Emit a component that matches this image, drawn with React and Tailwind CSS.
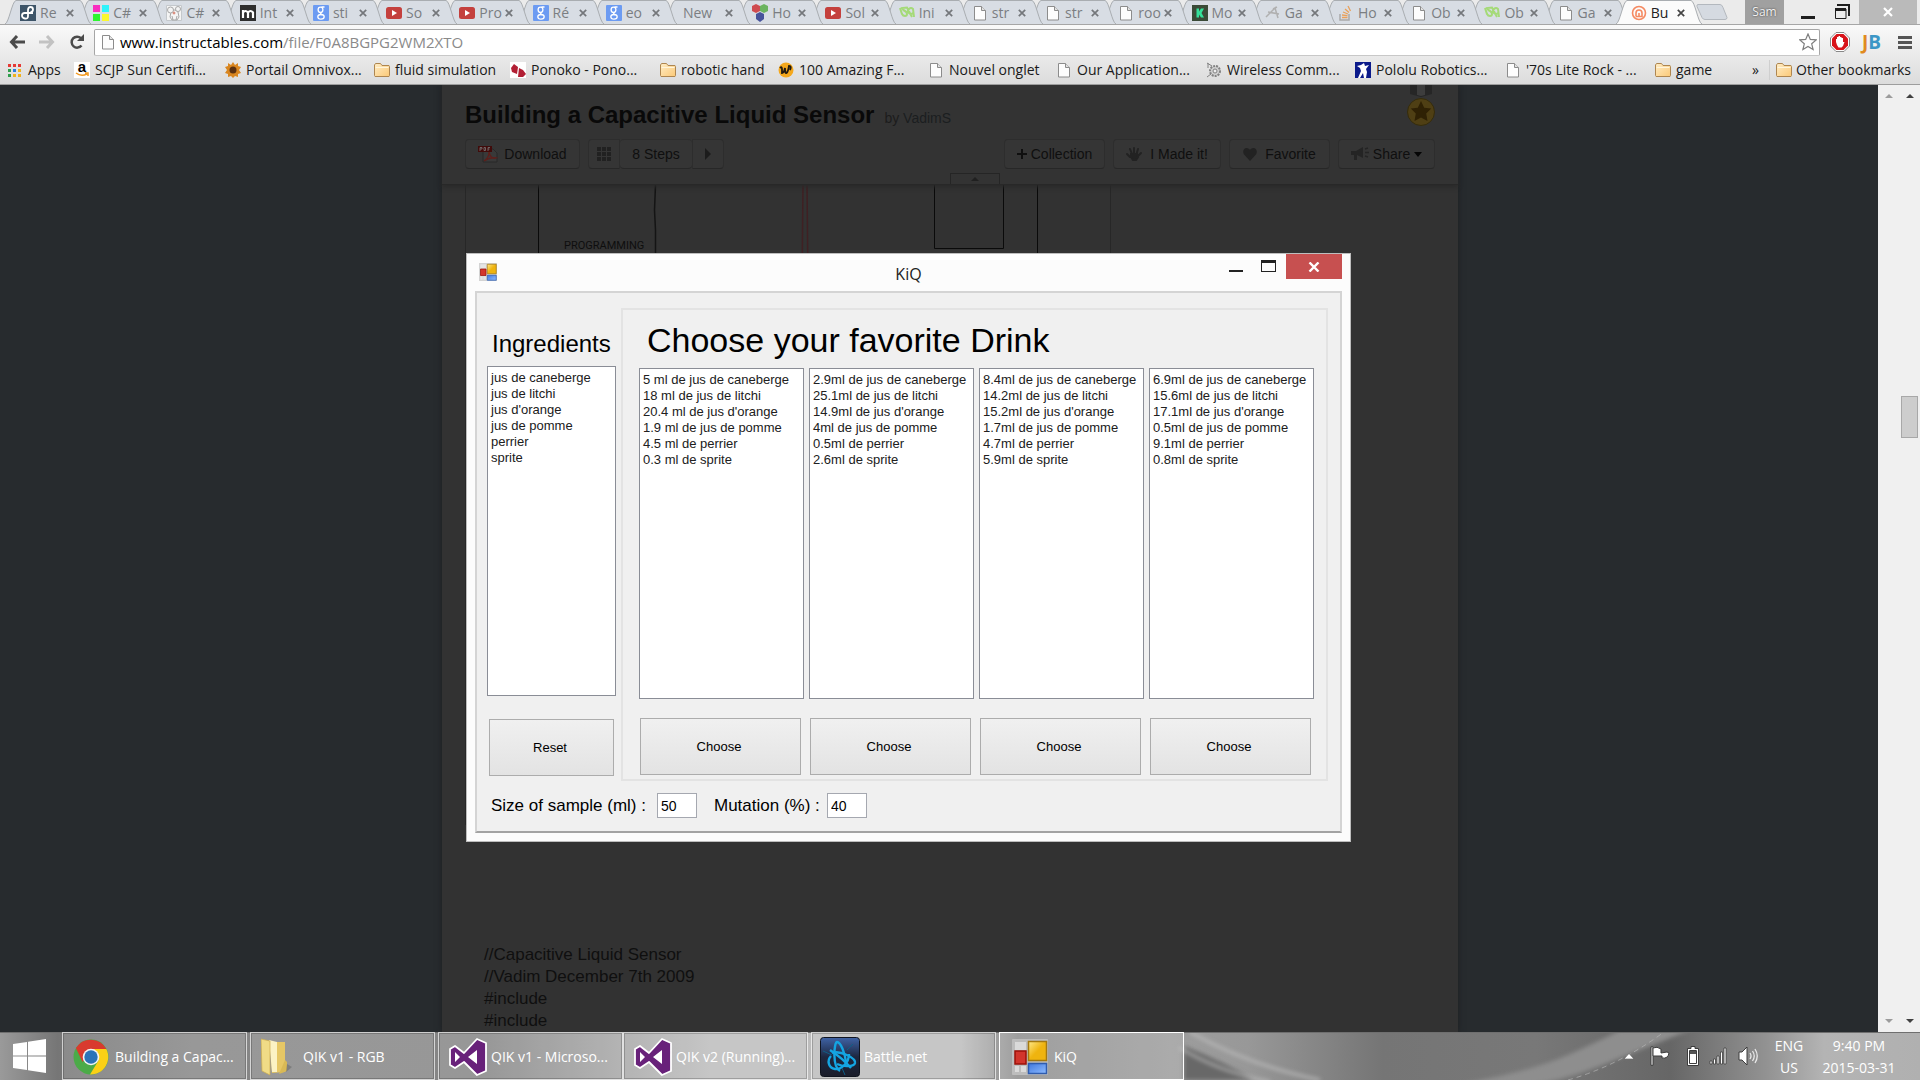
import React from "react";

/* ---------- small icons ---------- */

function PageIcon() {
  return (
    <svg viewBox="0 0 12 16" className="h-4 w-3 shrink-0" fill="#fdfdfd" stroke="#8c8c8c">
      <path d="M.5 1.5h7l4 4v9.5h-11z" />
      <path d="M7.5 1.5v4h4" fill="#e2e2e2" />
    </svg>
  );
}

function FolderIcon() {
  return (
    <svg viewBox="0 0 16 14" className="h-3.5 w-4 shrink-0" fill="none">
      <defs>
        <linearGradient id="fold" x1="0" y1="0" x2="1" y2="1">
          <stop offset="0" stopColor="#ffedc6" />
          <stop offset="1" stopColor="#fbc977" />
        </linearGradient>
      </defs>
      <path d="M.5 12.5V2l1-1.5h5L8 2.5h7l.5 1v9l-.5 1H1z" fill="url(#fold)" stroke="#ae8650" />
      <path d="M1.5 4.5h13" stroke="#fff5dc" />
    </svg>
  );
}

function YouTube() {
  return (
    <svg viewBox="0 0 16 16" className="h-4 w-4">
      <rect y="2" width="16" height="12" rx="2.5" fill="#c4403d" />
      <path d="M6 5l5 3-5 3z" fill="#fff" />
    </svg>
  );
}

function GoogleG() {
  return (
    <svg viewBox="0 0 16 16" className="h-4 w-4">
      <rect width="16" height="16" rx="1" fill="#6c9bf2" />
      <g fill="none" stroke="#fff" strokeWidth="1.3">
        <ellipse cx="7.5" cy="4.8" rx="2.4" ry="2.7" />
        <path d="M8.5 2h3M8.5 7.5q-2 1.2.5 2.3" />
        <ellipse cx="8" cy="11.8" rx="3.2" ry="2.3" />
      </g>
    </svg>
  );
}

function GreenLoops() {
  return (
    <svg viewBox="0 0 16 16" className="h-4 w-4" fill="none" stroke="#a5da78" strokeWidth="2">
      <path d="M1 3l2 6q1 2 3 2t2-2-2-3-3-3l5-.5 5 9.5M15 12l-1-8q-2-2-4 0t0 4 4 0" />
    </svg>
  );
}

function Favicon({ kind }) {
  switch (kind) {
    case "re":
      return (
        <svg viewBox="0 0 16 16" className="h-4 w-4">
          <rect width="16" height="16" fill="#3d5468" />
          <path
            d="M13 8H4.5Q2 8 2 10.5T5 13.500 8 11V5q0-3 2.500-3T13 4.500 10.500 7"
            fill="none"
            stroke="#fff"
            strokeWidth="1.8"
          />
        </svg>
      );
    case "cmyk":
      return (
        <svg viewBox="0 0 16 16" className="h-4 w-4">
          <path fill="#f92dc0" d="M0 0h7v7H0z" />
          <path fill="#2ff3fb" d="M9 0h7v7H9z" />
          <path fill="#2df52f" d="M0 9h7v7H0z" />
          <path fill="#fbf82f" d="M9 9h7v7H9z" />
        </svg>
      );
    case "mouse":
      return (
        <svg viewBox="0 0 16 16" className="h-4 w-4" fill="#f4f4f4" stroke="#a7a7a7">
          <path d="M.5.5h15v15H.5z" stroke="#c4c8cc" />
          <path d="M5 7q3-4 7 0l1 5-2 3H6l-2-3z" />
          <circle cx="4.5" cy="5" r="3" />
          <circle cx="12" cy="4" r="2.5" />
          <circle cx="8" cy="8" r="1" fill="#d98a7a" stroke="#d98a7a" />
          <path d="M6 11l1 4M11 11l-1 4" />
        </svg>
      );
    case "m":
      return (
        <svg viewBox="0 0 16 16" className="h-4 w-4">
          <rect width="16" height="16" fill="#2e2e2e" />
          <path d="M3 13V5M3 7.5q2.5-3 5 0V13M8 7.5q2.5-3 5 0V13" fill="none" stroke="#fff" strokeWidth="2.2" />
        </svg>
      );
    case "g":
      return <GoogleG />;
    case "yt":
      return <YouTube />;
    case "cubes":
      return (
        <svg viewBox="0 0 16 18" className="h-[18px] w-4">
          <path d="M0 2l4-2 4 2v5L4 9 0 7z" fill="#cf4b4f" />
          <path d="M8 2l4-2 4 2v5l-4 2-4-2z" fill="#6bb45f" />
          <path d="M4 10l4-2 4 2v5l-4 3-4-3z" fill="#47539b" />
        </svg>
      );
    case "loops":
      return <GreenLoops />;
    case "page":
      return <PageIcon />;
    case "k":
      return (
        <svg viewBox="0 0 16 16" className="h-4 w-4">
          <rect width="16" height="16" fill="#3a4a37" />
          <path d="M4.5 3.5H7v3l2-3h3L9.5 8l2.5 4.5H9L7 9.5v3H4.5z" fill="#35e09a" />
        </svg>
      );
    case "gray":
      return (
        <svg viewBox="0 0 16 16" className="h-4 w-4" fill="none" stroke="#b0b0b0" strokeWidth="1.5">
          <path d="M1 12L10 3l3 10M3 7l11 2M8 4l4-2" />
        </svg>
      );
    case "so":
      return (
        <svg viewBox="0 0 16 16" className="h-4 w-4" fill="none">
          <path d="M2 9v6h9V9" stroke="#a9a9a9" strokeWidth="1.5" />
          <path d="M4 12.5h5.5M4 10l5.5.6M5 7l5 2M7 4l4 3.5M10 1l2.5 5" stroke="#e9a15b" strokeWidth="1.3" />
        </svg>
      );
    case "instr":
      return (
        <svg viewBox="0 0 16 16" className="h-4 w-4" fill="none" stroke="#f58a62" strokeWidth="1.6">
          <circle cx="8" cy="8" r="6.5" />
          <path d="M5 11.5V8a3 3 0 0 1 6 0v3.5H5M8 8v3.5" />
        </svg>
      );
    default:
      return null;
  }
}

const tabs = [
  ["Re", "re"], ["C#", "cmyk"], ["C#", "mouse"], ["Int", "m"], ["sti", "g"], ["So", "yt"], ["Pro", "yt"],
  ["Ré", "g"], ["eo", "g"], ["New", null], ["Ho", "cubes"], ["Sol", "yt"], ["Ini", "loops"], ["str", "page"],
  ["str", "page"], ["roo", "page"], ["Mo", "k"], ["Ga", "gray"], ["Ho", "so"], ["Ob", "page"], ["Ob", "loops"],
  ["Ga", "page"], ["Bu", "instr"],
];

function TabStrip() {
  return (
    <div className="flex h-6 shrink-0 bg-[#ebebeb]">
      <div role="tablist" className="flex min-w-0 flex-1 pl-[5px]">
        {tabs.map(([title, icon], i) => {
          const active = i === tabs.length - 1;
          return (
            <div key={i} className="relative min-w-0 flex-1" style={{ zIndex: active ? 40 : 30 - i }}>
              <svg viewBox="0 0 86 24" className="absolute top-0 left-0 h-6 w-[86px]" preserveAspectRatio="none">
                <path
                  d="M0 24C4 23 7 1 11 .5h64C79 1 82 23 86 24"
                  fill={active ? "#fbfbfb" : "#d8dde4"}
                  stroke="#a9adb1"
                />
              </svg>
              <div className="relative flex h-full items-center pt-px pl-[15px]">
                <button role="tab" aria-selected={active} className="flex h-full w-[46px] items-center gap-1">
                  {icon && (
                    <span className="flex w-4 shrink-0 justify-center">
                      <Favicon kind={icon} />
                    </span>
                  )}
                  <span
                    className={
                      "text-sm whitespace-nowrap " +
                      (icon ? "" : "pl-1 ") +
                      (active ? "text-[#222]" : "text-[#7b7e82]")
                    }
                  >
                    {title}
                  </span>
                </button>
                <button aria-label="Close tab" className={active ? "text-[#444]" : "text-[#74777b]"}>
                  <svg viewBox="0 0 8 8" className="h-2 w-2" fill="none" stroke="currentColor" strokeWidth="1.7">
                    <path d="M.8.8l6.4 6.4M7.2.8L.8 7.2" />
                  </svg>
                </button>
              </div>
            </div>
          );
        })}
      </div>
      <div className="flex w-[231px] shrink-0">
        <button aria-label="New tab" className="flex w-[56px] items-center pl-[7px]">
          <svg viewBox="0 0 32 16" className="h-4 w-8">
            <path d="M2 .5h22q2 0 3 3l4 10q0 2-2 2H9q-2 0-3-2L1 2.5Q.5.5 2 .5z" fill="#d5dae1" stroke="#b3b8be" />
          </svg>
        </button>
        <button className="w-[39px] bg-[#a0a0a0] text-xs text-[#f2f2f2] [text-shadow:0_0_2px_#333]">Sam</button>
        <button aria-label="Minimize" className="flex w-[40px] justify-center pt-4 pl-2">
          <span className="h-[3px] w-3.5 bg-[#1e1e1e]" />
        </button>
        <button aria-label="Restore" className="flex flex-1 items-center justify-center">
          <svg viewBox="0 0 16 16" className="h-4 w-4" fill="none" stroke="#1e1e1e">
            <path d="M3 1h12v11" strokeWidth="2" />
            <path d="M1 5.5h11" strokeWidth="3" />
            <path d="M1.5 5v9.5H12V5" />
          </svg>
        </button>
        <button aria-label="Close" className="mr-[3px] flex w-[58px] items-center justify-center bg-[#bababa]">
          <svg viewBox="0 0 10 10" className="h-2.5 w-2.5" stroke="#fff" strokeWidth="2.2">
            <path d="M1 1l8 8M9 1L1 9" />
          </svg>
        </button>
      </div>
    </div>
  );
}

function Toolbar() {
  return (
    <div className="flex h-[30px] shrink-0 items-center">
      <div className="flex w-[94px] shrink-0 items-center gap-3.5 pl-[9px]">
        <button aria-label="Back">
          <svg viewBox="0 0 16 14" className="h-3.5 w-4" fill="none" stroke="#4b4b4b" strokeWidth="3">
            <path d="M8 1L2.5 7 8 13M3 7h13" />
          </svg>
        </button>
        <button aria-label="Forward">
          <svg viewBox="0 0 16 14" className="h-3.5 w-4" fill="none" stroke="#c2c2c2" strokeWidth="3">
            <path d="M8 1l5.5 6L8 13M13 7H0" />
          </svg>
        </button>
        <button aria-label="Reload">
          <svg viewBox="0 0 16 16" className="h-4 w-4" fill="none" stroke="#4b4b4b" strokeWidth="2.5">
            <path d="M12.5 11.5A5.5 5.5 0 1 1 12 4.2" />
            <path d="M15 0v7H8z" fill="#4b4b4b" stroke="none" />
          </svg>
        </button>
      </div>
      <label className="relative flex h-[27px] min-w-0 flex-1 items-center gap-1.5 rounded-xs border border-[#a6a6a6] border-b-[#c8c8c8] bg-white pl-[7px]">
        <PageIcon />
        <span className="flex-1 text-[15px] whitespace-nowrap text-[#8a8a8a]">
          <span className="text-black">www.instructables.com</span>/file/F0A8BGPG2WM2XTO
        </span>
        <input
          aria-label="Address"
          defaultValue=""
          className="absolute inset-0 w-full bg-transparent opacity-0"
        />
        <svg viewBox="0 0 18 18" className="mr-0.5 h-[18px] w-[18px]" fill="#fff" stroke="#7d7d7d" strokeWidth="1.2">
          <path d="M9 1l2.3 5.4 5.9.5-4.5 3.9 1.4 5.7L9 13.4l-5.1 3.1 1.4-5.7L.8 6.9l5.9-.5z" />
        </svg>
      </label>
      <div className="flex w-[100px] shrink-0 items-center pl-2.5">
        <button aria-label="AdBlock">
          <svg viewBox="0 0 20 20" className="h-5 w-5">
            <path d="M6 .5h8L19.5 6v8L14 19.5H6L.5 14V6z" fill="#fff" stroke="#888" />
            <path d="M6.5 2h7L18 6.5v7L13.5 18h-7L2 13.5v-7z" fill="#d8141a" />
            <path d="M6 10V7h1V5h1.5V4H10v1h1.5v1H13v4h1.5L13 14l-1.5 1.5h-3L7 13z" fill="#fff" />
          </svg>
        </button>
        <button className="ml-3 flex w-[22px] font-['Open_Sans',sans-serif] text-[19px] leading-5 font-bold text-[#e08a20]">
          J<span className="text-[#3c97c6]">B</span>
        </button>
        <button aria-label="Menu" className="ml-3.5 flex w-3.5 flex-col gap-[2px]">
          <span className="h-[3px] bg-[#555]" />
          <span className="h-[3px] bg-[#555]" />
          <span className="h-[3px] bg-[#555]" />
        </button>
      </div>
    </div>
  );
}

function BookmarkIcon({ kind }) {
  switch (kind) {
    case "apps":
      return (
        <svg viewBox="0 0 13 13" className="h-[13px] w-[13px]">
          <path d="M0 0h3v3H0zM5 0h3v3H5zM10 0h3v3h-3z" fill="#e53a35" />
          <path d="M0 5h3v3H0z" fill="#2f9e4c" />
          <path d="M5 5h3v3H5z" fill="#2b7de0" />
          <path d="M10 5h3v3h-3z" fill="#f0b21f" />
          <path d="M0 10h3v3H0z" fill="#2f9e4c" />
          <path d="M5 10h3v3H5zM10 10h3v3h-3z" fill="#f0b21f" />
        </svg>
      );
    case "amazon":
      return (
        <span className="flex h-4 w-4 flex-col items-center bg-white font-['Liberation_Sans',sans-serif] text-[15px] leading-[10px] font-bold text-black">
          a
          <svg viewBox="0 0 14 5" className="h-[5px] w-3.5" fill="none" stroke="#f49a1e" strokeWidth="1.5">
            <path d="M1 1q5 4 11 1M10 1h3v3" />
          </svg>
        </span>
      );
    case "sun":
      return (
        <svg viewBox="0 0 16 16" className="h-4 w-4">
          <path
            d="M8 0l2 3 3-2v3l3 1-2 3 2 3-3 1v3l-3-1-2 2-2-2-3 1v-3l-3-1 2-3-2-3 3-1V1l3 2z"
            fill="#d9861f"
          />
          <circle cx="8" cy="8" r="3.5" fill="#5a3010" />
        </svg>
      );
    case "ponoko":
      return (
        <svg viewBox="0 0 16 16" className="h-4 w-4">
          <rect width="16" height="16" fill="#fff" />
          <path d="M1 6l3-4 4 3-1 7-5-2zM9 6l4 2 3 4-3 3H8z" fill="#b21f34" />
        </svg>
      );
    case "w":
      return (
        <svg viewBox="0 0 16 16" className="h-4 w-4">
          <circle cx="8" cy="8" r="7.5" fill="#f5a81c" />
          <path d="M2 6q2-2 2 1t0 4q2 0 3-5 0 6 1.5 5T11 4q3 0 1 4" fill="none" stroke="#221a10" strokeWidth="1.8" />
        </svg>
      );
    case "gear":
      return (
        <svg viewBox="0 0 16 16" className="h-4 w-4" fill="#d0d0d0" stroke="#828282">
          <circle cx="9" cy="9" r="5" strokeDasharray="2 1" strokeWidth="2" />
          <circle cx="9" cy="9" r="2" fill="#eee" />
          <path d="M1 1l5 3M1 15l4-3M2 1v5" />
        </svg>
      );
    case "pololu":
      return (
        <svg viewBox="0 0 16 16" className="h-4 w-4">
          <rect width="16" height="16" fill="#0b1a8a" />
          <path d="M9 1l1 3 4-1-3 4 1 3-1 6H9l-1-5-3 5H3l3-7-1-3-3-2 4-1z" fill="#fff" />
        </svg>
      );
    case "folder":
      return <FolderIcon />;
    default:
      return <PageIcon />;
  }
}

const bookmarks = [
  ["Apps", "apps", "w-[66px] gap-[7px]"],
  ["SCJP Sun Certifi...", "amazon", "w-[151px] gap-[5px]"],
  ["Portail Omnivox...", "sun", "w-[149px] gap-[5px]"],
  ["fluid simulation", "folder", "w-[136px] gap-[5px]"],
  ["Ponoko - Pono...", "ponoko", "w-[150px] gap-[5px]"],
  ["robotic hand", "folder", "w-[118px] gap-[5px]"],
  ["100 Amazing F...", "w", "w-[152px] gap-[5px]"],
  ["Nouvel onglet", "page", "w-[128px] gap-[7px]"],
  ["Our Application...", "page", "w-[148px] gap-[7px]"],
  ["Wireless Comm...", "gear", "w-[149px] gap-[5px]"],
  ["Pololu Robotics...", "pololu", "w-[152px] gap-[5px]"],
  ["'70s Lite Rock - ...", "page", "w-[148px] gap-[7px]"],
  ["game", "folder", "w-[64px] gap-[5px]"],
];

function Bookmarks() {
  return (
    <nav className="flex h-[27px] shrink-0 items-center pr-[9px] pb-px pl-2 text-sm text-[#1a1a1a]">
      {bookmarks.map(([label, icon, box]) => (
        <a key={label} href="#" className={"flex shrink-0 items-center whitespace-nowrap " + box}>
          <BookmarkIcon kind={icon} />
          {label}
        </a>
      ))}
      <button className="ml-auto pr-2.5" aria-label="More bookmarks">»</button>
      <a href="#" className="flex items-center gap-1 border-l border-[#cfcfcf] pl-1.5 whitespace-nowrap">
        <FolderIcon />
        Other bookmarks
      </a>
    </nav>
  );
}

/* ---------- dimmed article ---------- */

const pill =
  "flex h-[30px] items-center justify-center rounded-sm border border-[#2d2d2d] border-b-[#272727] bg-[#353535] text-sm text-[#0f0f0f]";

function ArticleHeader() {
  return (
    <header className="relative border-b border-[#282828] bg-[#333] px-[23px] pt-4 pb-[15px] shadow-[0_2px_4px_#292929]">
      <div className="flex items-baseline gap-2.5 leading-7">
        <h1 className="text-2xl leading-7 font-bold text-[#090909]">Building a Capacitive Liquid Sensor</h1>
        <span className="text-sm text-[#1c1c1c]">
          by <a href="#" className="text-[#1b1e20]">VadimS</a>
        </span>
      </div>
      <div className="mt-2.5 flex items-center">
        <button className={pill + " w-[115px] gap-1.5"}>
          <svg viewBox="0 0 20 17" className="h-[17px] w-5">
            <path d="M5 3h10l4 4v9H5z" fill="#393939" stroke="#292929" />
            <path d="M6 15c3-2 5-6 5-9 1 5 4 7 7 6-5-1-9 1-12 3z" fill="none" stroke="#5c1f1b" strokeWidth="1.3" />
            <rect width="14" height="6" fill="#400b0a" />
            <path d="M2 5V1.5h2V3H2M6 1.5v3h1.5v-3zM10 5V1.5h2M10 3h1.5" fill="none" stroke="#777" strokeWidth=".8" />
          </svg>
          Download
        </button>
        <div className="ml-2 flex w-[136px]">
          <button aria-label="All steps" className={pill + " w-8 rounded-r-none bg-[#2c2c2c]"}>
            <svg viewBox="0 0 14 14" className="h-3.5 w-3.5" fill="#212121">
              <path d="M0 0h4v4H0zM5 0h4v4H5zM10 0h4v4h-4zM0 5h4v4H0zM5 5h4v4H5zM10 5h4v4h-4zM0 10h4v4H0zM5 10h4v4H5zM10 10h4v4h-4z" />
            </svg>
          </button>
          <button className={pill + " flex-1 rounded-none border-x-0"}>8 Steps</button>
          <button aria-label="Next" className={pill + " w-8 rounded-l-none"}>
            <svg viewBox="0 0 6 12" className="h-3 w-1.5" fill="#1c1c1c">
              <path d="M0 0l6 6-6 6z" />
            </svg>
          </button>
        </div>
        <div className="ml-auto flex gap-2">
          <button className={pill + " w-[101px] gap-1"}>
            <svg viewBox="0 0 10 10" className="h-2.5 w-2.5" stroke="#0f0f0f" strokeWidth="2">
              <path d="M5 0v10M0 5h10" />
            </svg>
            Collection
          </button>
          <button className={pill + " w-[108px] gap-2"}>
            <svg viewBox="0 0 16 16" className="h-4 w-4" fill="none" stroke="#222" strokeWidth="2" strokeLinecap="round">
              <path d="M6 8L4 3M8 7V2M10.5 8L12 3M12 10l3-3M4 11L1 8" />
              <path d="M5 8h6l1 3-2 3H7l-2-3z" fill="#222" />
            </svg>
            I Made it!
          </button>
          <button className={pill + " w-[101px] gap-2"}>
            <svg viewBox="0 0 14 14" className="h-3.5 w-3.5" fill="#222">
              <path d="M7 14L1 7.5C-1 4 1 1 3.5 1 5.5 1 6.5 2 7 3c.5-1 1.5-2 3.5-2C13 1 15 4 13 7.5z" />
            </svg>
            Favorite
          </button>
          <button className={pill + " w-[97px] gap-1"}>
            <svg viewBox="0 0 18 14" className="h-3.5 w-[18px]" fill="#242424">
              <path d="M0 4h5l7-4v11L6 8v5H3V8H0z" />
              <path d="M14 2l3-1M14 5.5h4M14 9l3 1" stroke="#242424" strokeWidth="1.5" />
            </svg>
            Share
            <svg viewBox="0 0 8 5" className="h-[5px] w-2" fill="#050505">
              <path d="M0 0h8L4 5z" />
            </svg>
          </button>
        </div>
      </div>
      <svg viewBox="0 0 28 42" className="absolute top-0 right-[23px] h-[42px] w-7">
        <path d="M3 0h22v9l-11 3L3 9z" fill="#262626" />
        <path d="M10 0h8v10l-4 1-4-1z" fill="#3d3d3d" />
        <circle cx="14" cy="27" r="13.5" fill="#4f3f14" stroke="#352c0c" />
        <path d="M14 16l3.2 6.8 7 .8-5 5 1.3 7.4-6.5-3.5L7.5 36l1.3-7.4-5-5 7-.8z" fill="#2f2104" />
      </svg>
      <button
        aria-label="Collapse header"
        className="absolute right-[458px] bottom-0 flex h-[11px] w-[50px] items-center justify-center border border-b-0 border-[#252525]"
      >
        <svg viewBox="0 0 8 4" className="h-1 w-2" fill="#202020">
          <path d="M0 4l4-4 4 4z" />
        </svg>
      </button>
    </header>
  );
}

function Article() {
  return (
    <main className="mx-auto flex h-full w-[1016px] flex-col bg-[#323232] font-['Liberation_Sans',Arial,sans-serif] shadow-[0_0_6px_#1c1e20]">
      <ArticleHeader />
      <svg viewBox="0 0 646 640" className="ml-[23px] h-[640px] w-[646px] shrink-0" fill="none">
        <path d="M.5 0v640M645.5 0v640" stroke="#272727" />
        <path d="M73.5 0v600M572.5 0v600M469.5 0v63.5h69V0" stroke="#0a0a0a" />
        <path d="M190.5 0l-1 25 1 20v500" stroke="#141414" strokeWidth="1.5" />
        <path d="M338 0l-1 100M342 0l1 100" stroke="#3f2023" strokeWidth="1.5" />
        <text x="99" y="64" fill="#0e0e0e" className="font-['Roboto',sans-serif] text-[11px]">
          PROGRAMMING
        </text>
      </svg>
      <p className="mt-[119px] pl-[42px] text-[17px] leading-[22px] text-[#0f0f0f]">
        //Capacitive Liquid Sensor
        <br />
        //Vadim December 7th 2009
        <br />
        #include
        <br />
        #include
      </p>
    </main>
  );
}

function ScrollColumn({ color, thumb }) {
  return (
    <div className="flex w-[21px] flex-col items-center bg-[#f0f0f0] py-[9px]">
      <svg viewBox="0 0 8 4" className="h-1 w-2" fill={color}>
        <path d="M0 4l4-4 4 4z" />
      </svg>
      {thumb && <div className="mt-[298px] h-[42px] w-[17px] border border-[#a8a8a8] bg-[#cdcdcd]" />}
      <svg viewBox="0 0 8 4" className="mt-auto h-1 w-2" fill={color}>
        <path d="M0 0l4 4 4-4z" />
      </svg>
    </div>
  );
}

/* ---------- KiQ dialog ---------- */

function FormIcon({ className }) {
  return (
    <svg viewBox="0 0 36 36" className={className}>
      <defs>
        <linearGradient id="fy" x1="0" y1="0" x2="1" y2="1">
          <stop offset="0" stopColor="#ffe98a" />
          <stop offset=".5" stopColor="#efb40f" />
        </linearGradient>
        <linearGradient id="fb" x1="0" y1="0" x2="1" y2="1">
          <stop offset="0" stopColor="#3f78e0" />
          <stop offset="1" stopColor="#8fbcff" />
        </linearGradient>
      </defs>
      <path d="M.5.5h35v35H.5z" fill="#c9c9c9" fillOpacity=".7" stroke="#bdbdbd" />
      <path d="M3 3h11v8H3zM3 27h4v6H3zM9 27h5v6H9z" fill="#eee" fillOpacity=".6" />
      <path d="M16.5 2.5h18v19h-18z" fill="url(#fy)" stroke="#a5790f" strokeWidth="1.5" />
      <path d="M3 12h11v13H3z" fill="#d2352c" stroke="#9c1109" strokeWidth="1.5" />
      <path d="M16.5 24.5h18v10h-18z" fill="url(#fb)" stroke="#2f5cae" strokeWidth="1.5" />
    </svg>
  );
}

const ingredients = ["jus de caneberge", "jus de litchi", "jus d'orange", "jus de pomme", "perrier", "sprite"];

const drinks = [
  ["5 ml", "18 ml", "20.4 ml", "1.9 ml", "4.5 ml", "0.3 ml"],
  ["2.9ml", "25.1ml", "14.9ml", "4ml", "0.5ml", "2.6ml"],
  ["8.4ml", "14.2ml", "15.2ml", "1.7ml", "4.7ml", "5.9ml"],
  ["6.9ml", "15.6ml", "17.1ml", "0.5ml", "9.1ml", "0.8ml"],
];

function ListBox({ items, label, className }) {
  return (
    <ul
      role="listbox"
      aria-label={label}
      className={"border border-[#8a8d96] bg-white px-[3px] pt-[3px] text-[13px] leading-4 whitespace-nowrap text-[#202020] " + className}
    >
      {items.map((t) => (
        <li key={t} role="option" aria-selected="false">
          {t}
        </li>
      ))}
    </ul>
  );
}

const formButton =
  "h-[57px] border border-[#acacac] bg-linear-to-b from-[#f0f0f0] to-[#e3e3e3] pr-[3px] text-[13px] text-black";

const field = "h-[25px] w-10 border border-[#a5a8b0] bg-white px-[3px] text-sm";

function Dialog() {
  return (
    <div
      role="dialog"
      aria-labelledby="kiq-title"
      className="absolute top-[253px] left-[466px] z-10 w-[885px] border border-[#bdbdbd] bg-[#fcfcfc] px-2 pb-2 font-['Liberation_Sans',Arial,sans-serif]"
    >
      <div className="relative flex h-[37px] items-start">
        <FormIcon className="mt-[9px] ml-1 h-[18px] w-[18px]" />
        <h2
          id="kiq-title"
          className="absolute inset-x-0 top-2 text-center font-['Open_Sans',sans-serif] text-base text-[#222]"
        >
          KiQ
        </h2>
        <div className="relative ml-auto flex h-[25px]">
          <button aria-label="Minimize" className="flex w-8 justify-center pt-4">
            <span className="h-[2px] w-3.5 bg-[#222]" />
          </button>
          <button aria-label="Maximize" className="flex w-8 justify-center pt-1.5">
            <span className="h-3 w-[15px] border border-t-[3px] border-[#222]" />
          </button>
          <button aria-label="Close" className="ml-0.5 flex w-14 items-center justify-center bg-[#c75050]">
            <svg viewBox="0 0 12 10" className="h-2.5 w-3" stroke="#fff" strokeWidth="2.4">
              <path d="M1.5.5l9 9M10.5.5l-9 9" />
            </svg>
          </button>
        </div>
      </div>
      <div className="border-2 border-[#d4d4d4] border-b-[#a3a3a3] bg-[#f0f0f0] px-2.5 pb-3">
        <div className="flex gap-[5px] pt-[15px]">
          <div className="flex w-[129px] shrink-0 flex-col">
            <h3 className="flex h-[58px] items-end pb-1 pl-[5px] text-2xl leading-9 text-black">Ingredients</h3>
            <ListBox label="Ingredients" items={ingredients} className="h-[330px]" />
            <button className={formButton + " mx-0.5 mt-[23px]"}>Reset</button>
          </div>
          <section className="mr-0.5 flex-1 border-2 border-[#e3e3e3] pr-3 pb-1 pl-4">
            <h3 className="flex h-[58px] items-end pb-2.5 pl-2 text-[34px] leading-9 text-black">
              Choose your favorite Drink
            </h3>
            <div className="grid grid-cols-4 gap-[5px]">
              {drinks.map((amounts, i) => (
                <div key={i} className="flex flex-col">
                  <ListBox
                    label={"Drink " + (i + 1)}
                    items={amounts.map((amount, k) => amount + " de " + ingredients[k])}
                    className="h-[331px]"
                  />
                  <button className={formButton + " mt-[19px] mr-[3px] ml-px"}>Choose</button>
                </div>
              ))}
            </div>
          </section>
        </div>
        <form className="mt-3 flex items-center pl-1 text-[17px] text-black">
          <label htmlFor="sample" className="w-[166px]">Size of sample (ml) :</label>
          <input id="sample" defaultValue="50" className={field} />
          <label htmlFor="mutation" className="ml-[17px] w-[113px]">Mutation (%) :</label>
          <input id="mutation" defaultValue="40" className={field} />
        </form>
      </div>
    </div>
  );
}

/* ---------- taskbar ---------- */

function ChromeIcon() {
  return (
    <svg viewBox="0 0 36 36" className="h-9 w-9">
      <circle cx="18" cy="18" r="17.5" fill="#4bab48" />
      <path d="M2.9 9A17.5 17.5 0 0 1 33.3 10H18l-8.5 13z" fill="#d93a2e" />
      <path d="M33.3 10A17.5 17.5 0 0 1 17 35.5l8.5-14L18 10z" fill="#fbd016" />
      <circle cx="18" cy="18" r="8.3" fill="#f3f3f3" />
      <circle cx="18" cy="18" r="6.7" fill="#2b73b8" />
    </svg>
  );
}

function TaskFolder() {
  return (
    <svg viewBox="0 0 32 38" className="h-[38px] w-8">
      <path d="M9 4h15v30l-13 1z" fill="#e6c765" />
      <path d="M8 2l8 2v30h-5z" fill="#fbf2c4" />
      <path d="M0 1l9 2v34l-8-4z" fill="#f0db86" stroke="#cfae4e" strokeWidth=".7" />
      <path d="M24 22l2 2v9l-8 3" fill="#d9b955" />
      <path d="M26 26l5 3-6 5z" fill="#6d6d6d" opacity=".6" />
    </svg>
  );
}

function VisualStudioIcon() {
  return (
    <svg viewBox="0 0 38 38" className="h-[38px] w-[38px]">
      <path
        d="M1 11l5-3 9 7L28 1l9 4v28l-9 4-13-13-9 6-5-3z"
        fill="#68217a"
        stroke="#fff"
        strokeWidth="1.8"
        strokeLinejoin="round"
      />
      <path d="M6 14v10l5-5zM28 12l-9 7 9 7z" fill="#fff" />
    </svg>
  );
}

function BattleIcon() {
  return (
    <svg viewBox="0 0 40 40" className="h-10 w-10">
      <defs>
        <linearGradient id="bn" x1="0" y1="0" x2="0" y2="1">
          <stop offset="0" stopColor="#3f63a6" />
          <stop offset=".5" stopColor="#1d2740" />
          <stop offset="1" stopColor="#1b1d2a" />
        </linearGradient>
      </defs>
      <rect x=".5" y=".5" width="39" height="39" rx="3" fill="url(#bn)" stroke="#10141f" />
      <g fill="none" stroke="#14a5e2" strokeWidth="2.4">
        <path d="M20 34c-8-4-6-29-3-29 4 0 8 12 9 20" />
        <path d="M12 16c8-3 24 5 23 10-1 4-12 4-18 1" />
        <path d="M29 17c0 9-8 16-14 15-7-1-8-9-4-13" />
        <path d="M10 13c3 2 14 10 21 18" />
      </g>
      <path d="M3 14l9 4M22 31l3 7M27 13l6-6" stroke="#0d5e86" />
    </svg>
  );
}

function Task({ label, active, className = "", icon }) {
  return (
    <button
      className={
        "flex h-12 w-[185px] shrink-0 items-center border bg-white/15 pt-px text-left text-sm whitespace-nowrap text-white " +
        (active ? "border-white " : "border-white/60 ring-1 ring-black/20 ring-inset ") +
        className
      }
    >
      {icon}
      {label}
    </button>
  );
}

function Taskbar() {
  return (
    <footer className="relative flex h-12 shrink-0 items-center overflow-hidden bg-[#8d8d8d]">
      <svg viewBox="0 0 1920 48" preserveAspectRatio="none" className="absolute inset-0 h-full w-full">
        <defs>
          <linearGradient id="wall" x1="0" y1="0" x2="1" y2="0">
            <stop offset="0" stopColor="#9a9a9a" />
            <stop offset=".03" stopColor="#767676" />
            <stop offset=".1" stopColor="#868686" />
            <stop offset=".25" stopColor="#858585" />
            <stop offset=".32" stopColor="#a5a5a5" />
            <stop offset=".37" stopColor="#bcbcbc" />
            <stop offset=".5" stopColor="#bdbdbd" />
            <stop offset=".53" stopColor="#8e8e8e" />
            <stop offset=".61" stopColor="#9d9d9d" />
            <stop offset=".65" stopColor="#989898" />
            <stop offset=".72" stopColor="#757575" />
            <stop offset=".8" stopColor="#787878" />
            <stop offset=".87" stopColor="#666666" />
            <stop offset=".92" stopColor="#929292" />
            <stop offset=".95" stopColor="#b4b4b4" />
            <stop offset="1" stopColor="#b0b0b0" />
          </linearGradient>
          <filter id="soft">
            <feGaussianBlur stdDeviation="2" />
          </filter>
        </defs>
        <path d="M0 0h1920v48H0z" fill="url(#wall)" />
        <path d="M1184 14q40 16 70 34h-70z" fill="#686868" filter="url(#soft)" />
        <path d="M1190 0q60 34 130 48M1180 16q40 24 90 34" stroke="#c6c6c6" strokeWidth="2" fill="none" filter="url(#soft)" />
        <path d="M1460 52q70-12 110-30t50-24h70q-50 20-90 36t-80 20z" fill="#8e8e8e" filter="url(#soft)" />
        <path d="M1568 48q50-14 96-48" stroke="#bcbcbc" strokeDasharray="5 4" fill="none" opacity=".6" />
        <path d="M0 .5h1920" stroke="#6f6f6f" />
      </svg>
      <button aria-label="Start" className="relative flex w-[62px] shrink-0 pl-[13px]">
        <svg viewBox="0 0 33 34" className="h-[34px] w-[33px]" fill="#fff">
          <path d="M0 5l14-2v13.5H0zM15 2.8L33 0v16.5H15zM0 17.5h14V31L0 29zM15 17.5h18V34l-18-2.8z" />
        </svg>
      </button>
      <div className="relative flex flex-1">
        <Task label="Building a Capac..." className="mr-[3px] gap-1.5 pl-2.5" icon={<ChromeIcon />} />
        <Task label="QIK v1 - RGB" className="mr-[3px] gap-2.5 pl-2.5" icon={<TaskFolder />} />
        <Task label="QIK v1 - Microso..." className="gap-1 pl-2.5" icon={<VisualStudioIcon />} />
        <Task label="QIK v2 (Running)..." className="mr-[3px] gap-1 pl-2.5" icon={<VisualStudioIcon />} />
        <Task label="Battle.net" className="mr-[3px] gap-1 pl-2" icon={<BattleIcon />} />
        <Task label="KiQ" active className="gap-1.5 pl-3" icon={<FormIcon className="h-9 w-9" />} />
      </div>
      <div className="relative flex items-center text-sm text-white">
        <button aria-label="Show hidden icons">
          <svg viewBox="0 0 10 6" className="h-1.5 w-2.5" fill="#fff" stroke="#555" strokeWidth=".6">
            <path d="M0 6l5-5.5L10 6z" />
          </svg>
        </button>
        <svg viewBox="0 0 20 20" className="ml-4 h-5 w-5" fill="#fff" stroke="#3d3d3d">
          <path d="M1 .8h2v18.5H1z" />
          <path d="M3 2q4-2 8 1v4l6-1 2 1q-1 6-7 5v-2H3z" />
        </svg>
        <svg viewBox="0 0 12 20" className="ml-[17px] h-5 w-3" fill="none" stroke="#3d3d3d">
          <path d="M4 .5h4v2h3.5v17H.5v-17H4z" fill="#fff" />
          <path d="M2.5 4.5h7v13h-7z" fill="#fff" />
          <path d="M3 5h6v3H3z" fill="#555" stroke="none" />
        </svg>
        <svg viewBox="0 0 18 18" className="ml-2.5 h-[18px] w-[18px]" fill="#fff" stroke="#3d3d3d" strokeWidth=".8">
          <path d="M1 14h2v3H1zM4.5 12h2v5h-2zM8 9h2v8H8zM11.5 5h2v12h-2zM15 1h2v16h-2z" />
        </svg>
        <svg viewBox="0 0 20 20" className="ml-[11px] h-5 w-5" fill="none" stroke="#3d3d3d">
          <path d="M1 6h3l5-5v18l-5-5H1z" fill="#fff" />
          <path d="M12 7q2 3 0 6M14.5 5q3.5 5 0 10M17 3q4.5 7 0 14" stroke="#e8e8e8" strokeWidth="1.3" />
        </svg>
        <div className="ml-[15px] w-8 pt-px text-center leading-[22px]">
          <div>ENG</div>
          <div>US</div>
        </div>
        <div className="mr-[21px] ml-3.5 w-[80px] pt-px text-center leading-[22px] whitespace-nowrap">
          <div>9:40 PM</div>
          <div>2015-03-31</div>
        </div>
      </div>
    </footer>
  );
}

export default function App() {
  return (
    <div className="relative flex h-screen flex-col overflow-hidden bg-[#272b2e] font-['Open_Sans','Noto_Sans',sans-serif]">
      <TabStrip />
      <div className="flex shrink-0 flex-col border-t border-b border-t-[#a6a6a6] border-b-[#9d9d9d] bg-linear-to-b from-[#f9f9f9] to-[#dcdcdc] pt-0.5">
        <Toolbar />
        <Bookmarks />
      </div>
      <div className="flex min-h-0 flex-1">
        <div className="min-w-0 flex-1 overflow-hidden pl-[22px]">
          <Article />
        </div>
        <div className="flex w-[42px] shrink-0 bg-[#f0f0f0]">
          <ScrollColumn color="#9c9c9c" />
          <ScrollColumn color="#404040" thumb />
        </div>
      </div>
      <Taskbar />
      <Dialog />
    </div>
  );
}
